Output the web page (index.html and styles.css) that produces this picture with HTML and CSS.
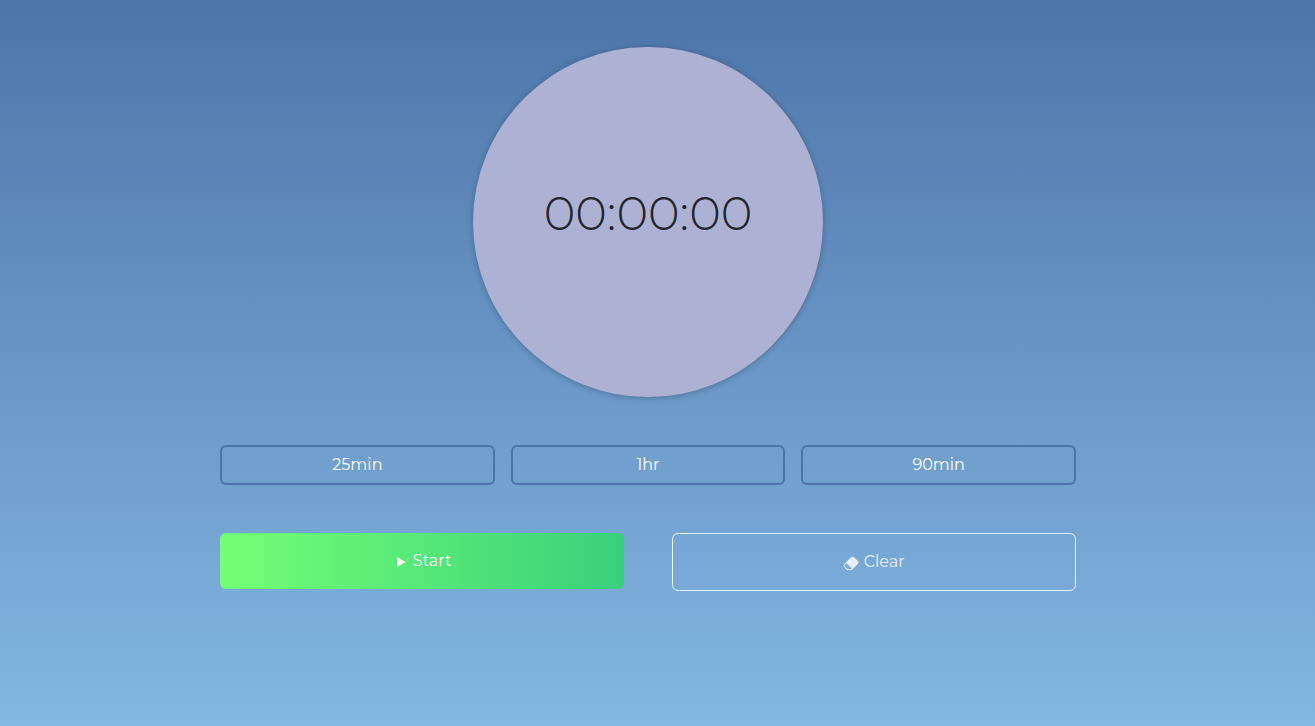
FILE: index.html
```html
<!DOCTYPE html>
<html lang="en">
<head>
<meta charset="utf-8">
<meta name="viewport" content="width=device-width, initial-scale=1">
<title>Timer</title>
<link rel="stylesheet" href="styles.css">
</head>
<body>
<main class="timer">
  <div class="dial"><time class="clock">00:00:00</time></div>
  <div class="presets">
    <button class="button preset" type="button">25min</button>
    <button class="button preset" type="button">1hr</button>
    <button class="button preset" type="button">90min</button>
  </div>
  <div class="actions">
    <button class="button start" type="button">
      <svg class="icon" viewBox="0 0 16 16" aria-hidden="true"><path d="M4 3 L12.600 8 L4 13 Z"/></svg>
      Start
    </button>
    <button class="button clear" type="button">
      <svg class="icon" viewBox="0 0 16 16" aria-hidden="true"><path d="M8.086 2.207a2 2 0 0 1 2.828 0l3.879 3.879a2 2 0 0 1 0 2.828l-5.500 5.500A2 2 0 0 1 7.879 15H5.120a2 2 0 0 1-1.414-.586l-2.500-2.500a2 2 0 0 1 0-2.828zm.66 11.340L3.453 8.254 1.914 9.793a1 1 0 0 0 0 1.414l2.500 2.500a1 1 0 0 0 .707.293H7.880a1 1 0 0 0 .707-.293z"/></svg>
      Clear
    </button>
  </div>
</main>
</body>
</html>
```
FILE: styles.css
```css
* {
  box-sizing: border-box;
}

body {
  min-height: 100vh;
  margin: 0;
  padding: 47px 19px 48px 0;
  background: linear-gradient(#4e75aa, #84b7e2);
  color: #212529;
  font-family: Montserrat, Inter, sans-serif;
  font-size: 16px;
  line-height: 24px;
}

.timer {
  display: grid;
  gap: 48px;
  width: 100%;
  max-width: 856px;
  margin: 0 auto;
}

.dial {
  display: flex;
  align-items: center;
  justify-content: center;
  width: 350px;
  aspect-ratio: 1;
  margin: 0 auto;
  padding-bottom: 18px;
  border-radius: 50%;
  background: #adb1d4;
  box-shadow: 0 1px 6px rgba(0, 0, 0, 0.25);
}

.clock {
  font-size: 48px;
  font-weight: 300;
  line-height: 58px;
}

.presets {
  display: grid;
  grid-template-columns: repeat(3, 1fr);
  gap: 16px;
}

.actions {
  display: grid;
  grid-template-columns: repeat(2, 1fr);
  align-items: start;
  gap: 48px;
}

.button {
  margin: 0;
  border: 0;
  border-radius: 6px;
  background: transparent;
  color: #fff;
  font: inherit;
  text-align: center;
  cursor: pointer;
}

.preset {
  padding: 6px 12px;
  border: 2px solid #4c73a9;
}

.start {
  padding: 16px;
  background: linear-gradient(90deg, #73ff75, #3ad07b);
}

.clear {
  padding: 16px;
  border: 1px solid #eef4fb;
  color: #e8f1fb;
}

.icon {
  width: 16px;
  height: 16px;
  fill: currentColor;
  vertical-align: -4px;
}
```
